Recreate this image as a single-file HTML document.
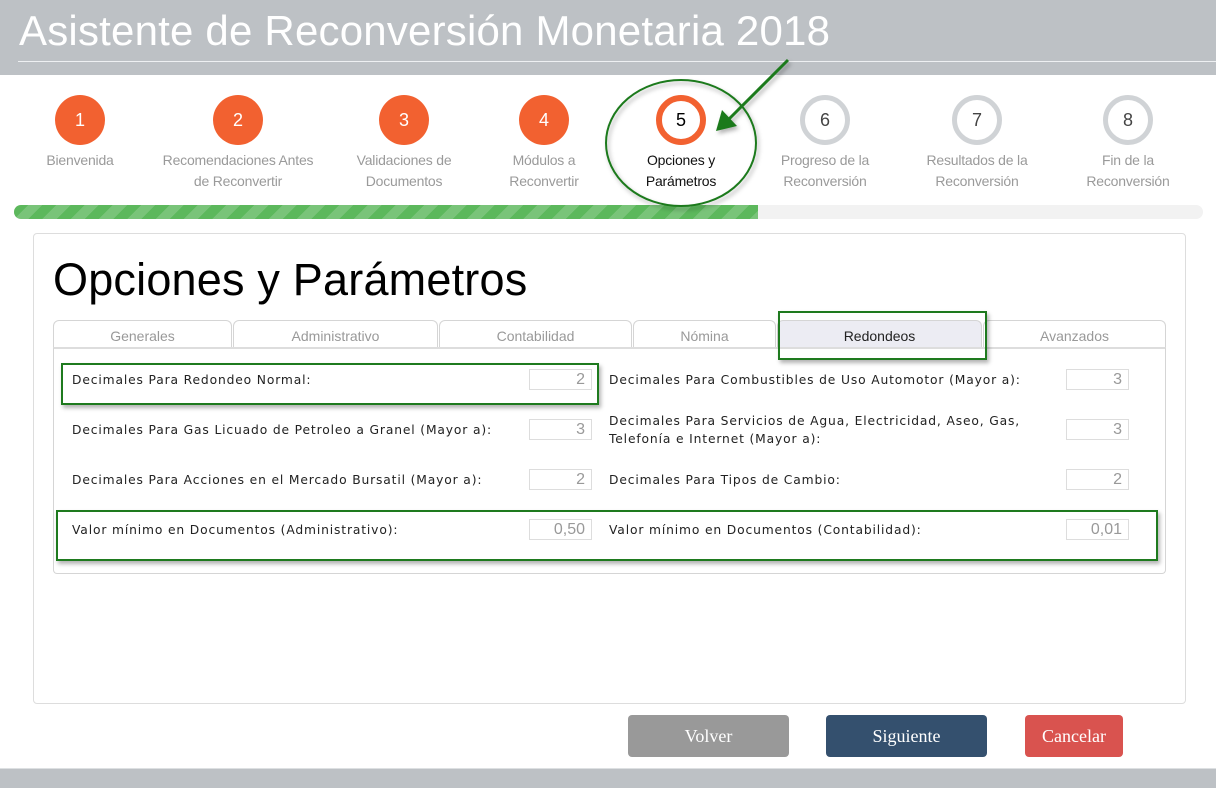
<!DOCTYPE html>
<html><head><meta charset="utf-8"><style>
*{margin:0;padding:0;box-sizing:border-box}
body{width:1216px;height:788px;position:relative;background:#fff;font-family:"Liberation Sans",sans-serif;overflow:hidden}
.hdr{position:absolute;left:0;top:0;width:1216px;height:75px;background:#bdc1c5}
.hdr h1{position:absolute;left:19px;top:7px;font-weight:normal;font-size:42px;color:#fff;letter-spacing:0.2px}
.hdr .ln{position:absolute;left:18px;right:0;top:61px;height:1px;background:#eef0f2}
.ftr{position:absolute;left:0;top:768px;width:1216px;height:20px;background:#bdc1c5;border-top:1px solid #dde0e2}
.step{position:absolute;top:95px;width:200px;margin-left:-100px;text-align:center}
.c{width:50px;height:50px;border-radius:50%;margin:0 auto;background:#f26130;color:#fff;font-size:18px;line-height:50px}
.c.cur{background:#fff;border:6px solid #f26130;color:#000;line-height:38px}
.c.todo{background:#fff;border:5px solid #d0d3d6;color:#444;line-height:40px}
.step p{margin-top:5px;font-size:14px;line-height:21px;color:#9a9a9a;letter-spacing:-0.2px}
.step p.a{color:#111}
.bar{position:absolute;left:14px;top:205px;width:1189px;height:14px;border-radius:7px;background:#f2f2f2;overflow:hidden}
.bar div{width:744px;height:100%;background:repeating-linear-gradient(135deg,#5cb85c 0 10px,#79c479 10px 20px)}
.panel{position:absolute;left:33px;top:233px;width:1153px;height:471px;border:1px solid #ddd;border-radius:4px}
.panel h2{position:absolute;left:19px;top:20px;font-weight:normal;font-size:45px;color:#000;letter-spacing:0.2px}
.tab{position:absolute;top:320px;height:28px;border:1px solid #d5d5d5;border-bottom:none;border-radius:6px 6px 0 0;text-align:center;font-size:14px;line-height:31px;color:#999;background:#fff}
.tab.on{background:#ececf3;color:#222}
.box{position:absolute;left:53px;top:347px;width:1113px;height:227px;border:1px solid #d5d5d5;border-top:2px solid #ddd;border-radius:0 0 4px 4px}
.lb{position:absolute;font-family:"DejaVu Sans",sans-serif;font-size:12.3px;letter-spacing:0.85px;color:#222;line-height:18px}
.in{position:absolute;width:63px;height:21px;border:1px solid #ddd;text-align:right;padding-right:6px;font-size:16px;color:#999;line-height:20px}
.g{position:absolute;border:2px solid #1e7a1e;box-shadow:2px 3px 4px rgba(0,0,0,.3)}
.btn{position:absolute;top:715px;height:42px;border-radius:4px;color:#fff;font-family:"Liberation Serif",serif;font-size:18px;text-align:center;line-height:42px}
</style></head><body>
<div class="hdr"><h1>Asistente de Reconversión Monetaria 2018</h1><div class="ln"></div></div>

<div class="step" style="left:80px"><div class="c">1</div><p>Bienvenida</p></div>
<div class="step" style="left:238px"><div class="c">2</div><p>Recomendaciones Antes<br>de Reconvertir</p></div>
<div class="step" style="left:404px"><div class="c">3</div><p>Validaciones de<br>Documentos</p></div>
<div class="step" style="left:544px"><div class="c">4</div><p>Módulos a<br>Reconvertir</p></div>
<div class="step" style="left:681px"><div class="c cur">5</div><p class="a">Opciones y<br>Parámetros</p></div>
<div class="step" style="left:825px"><div class="c todo">6</div><p>Progreso de la<br>Reconversión</p></div>
<div class="step" style="left:977px"><div class="c todo">7</div><p>Resultados de la<br>Reconversión</p></div>
<div class="step" style="left:1128px"><div class="c todo">8</div><p>Fin de la<br>Reconversión</p></div>

<div class="bar"><div></div></div>

<div class="panel"><h2>Opciones y Parámetros</h2></div>

<div class="tab" style="left:53px;width:179px">Generales</div>
<div class="tab" style="left:233px;width:205px">Administrativo</div>
<div class="tab" style="left:439px;width:193px">Contabilidad</div>
<div class="tab" style="left:633px;width:143px">Nómina</div>
<div class="tab on" style="left:777px;width:205px">Redondeos</div>
<div class="tab" style="left:983px;width:183px">Avanzados</div>
<div class="box"></div>

<div class="lb" style="left:72px;top:371px">Decimales Para Redondeo Normal:</div>
<div class="in" style="left:529px;top:369px">2</div>
<div class="lb" style="left:72px;top:421px">Decimales Para Gas Licuado de Petroleo a Granel (Mayor a):</div>
<div class="in" style="left:529px;top:419px">3</div>
<div class="lb" style="left:72px;top:471px">Decimales Para Acciones en el Mercado Bursatil (Mayor a):</div>
<div class="in" style="left:529px;top:469px">2</div>
<div class="lb" style="left:72px;top:521px">Valor mínimo en Documentos (Administrativo):</div>
<div class="in" style="left:529px;top:519px">0,50</div>

<div class="lb" style="left:609px;top:371px">Decimales Para Combustibles de Uso Automotor (Mayor a):</div>
<div class="in" style="left:1066px;top:369px">3</div>
<div class="lb" style="left:609px;top:412px">Decimales Para Servicios de Agua, Electricidad, Aseo, Gas,<br>Telefonía e Internet (Mayor a):</div>
<div class="in" style="left:1066px;top:419px">3</div>
<div class="lb" style="left:609px;top:471px">Decimales Para Tipos de Cambio:</div>
<div class="in" style="left:1066px;top:469px">2</div>
<div class="lb" style="left:609px;top:521px">Valor mínimo en Documentos (Contabilidad):</div>
<div class="in" style="left:1066px;top:519px">0,01</div>

<div class="g" style="left:61px;top:363px;width:538px;height:42px"></div>
<div class="g" style="left:56px;top:510px;width:1102px;height:51px"></div>
<div class="g" style="left:778px;top:311px;width:209px;height:49px"></div>

<svg style="position:absolute;left:0;top:0" width="1216" height="788">
<defs><filter id="s"><feDropShadow dx="2" dy="3" stdDeviation="2" flood-opacity="0.3"/></filter></defs>
<g filter="url(#s)">
<ellipse cx="681" cy="143" rx="75" ry="63" fill="none" stroke="#1e7a1e" stroke-width="2"/>
<line x1="788" y1="60" x2="728" y2="120" stroke="#1e7a1e" stroke-width="3"/>
<polygon points="716,131 722,110 737,126" fill="#1e7a1e"/>
</g>
</svg>

<div class="btn" style="left:628px;width:161px;background:#999">Volver</div>
<div class="btn" style="left:826px;width:161px;background:#34506e">Siguiente</div>
<div class="btn" style="left:1025px;width:98px;background:#d9534f">Cancelar</div>
<div class="ftr"></div>
</body></html>
